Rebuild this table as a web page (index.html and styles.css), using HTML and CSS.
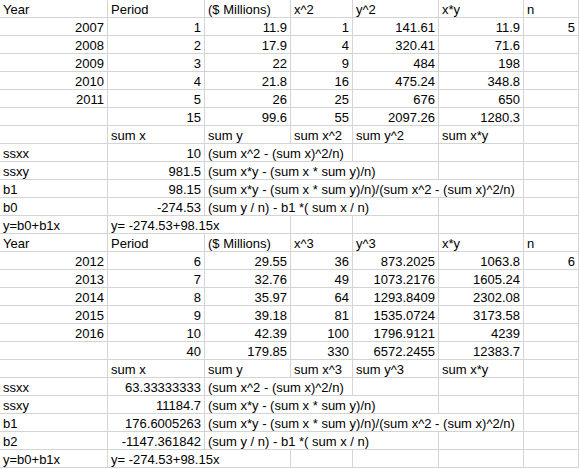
FILE: index.html
```html
<!DOCTYPE html>
<html>
<head>
<meta charset="utf-8">
<link rel="stylesheet" href="styles.css">
</head>
<body>
<table class="sheet">
<colgroup>
<col class="c1"><col class="c2"><col class="c3"><col class="c4"><col class="c5"><col class="c6"><col class="c7">
</colgroup>
<tbody>
<tr><td>Year</td><td>Period</td><td>($ Millions)</td><td>x^2</td><td>y^2</td><td>x*y</td><td>n</td></tr>
<tr><td class="r">2007</td><td class="r">1</td><td class="r">11.9</td><td class="r">1</td><td class="r">141.61</td><td class="r">11.9</td><td class="r">5</td></tr>
<tr><td class="r">2008</td><td class="r">2</td><td class="r">17.9</td><td class="r">4</td><td class="r">320.41</td><td class="r">71.6</td><td></td></tr>
<tr><td class="r">2009</td><td class="r">3</td><td class="r">22</td><td class="r">9</td><td class="r">484</td><td class="r">198</td><td></td></tr>
<tr><td class="r">2010</td><td class="r">4</td><td class="r">21.8</td><td class="r">16</td><td class="r">475.24</td><td class="r">348.8</td><td></td></tr>
<tr><td class="r">2011</td><td class="r">5</td><td class="r">26</td><td class="r">25</td><td class="r">676</td><td class="r">650</td><td></td></tr>
<tr><td></td><td class="r">15</td><td class="r">99.6</td><td class="r">55</td><td class="r">2097.26</td><td class="r">1280.3</td><td></td></tr>
<tr><td></td><td>sum x</td><td>sum y</td><td>sum x^2</td><td>sum y^2</td><td>sum x*y</td><td></td></tr>
<tr><td>ssxx</td><td class="r">10</td><td colspan="2">(sum x^2 - (sum x)^2/n)</td><td></td><td></td><td></td></tr>
<tr><td>ssxy</td><td class="r">981.5</td><td colspan="3">(sum x*y - (sum x * sum y)/n)</td><td></td><td></td></tr>
<tr><td>b1</td><td class="r">98.15</td><td colspan="4">(sum x*y - (sum x * sum y)/n)/(sum x^2 - (sum x)^2/n)</td><td></td></tr>
<tr><td>b0</td><td class="r">-274.53</td><td colspan="3">(sum y / n) - b1 *( sum x / n)</td><td></td><td></td></tr>
<tr><td>y=b0+b1x</td><td colspan="2">y= -274.53+98.15x</td><td></td><td></td><td></td><td></td></tr>
<tr><td>Year</td><td>Period</td><td>($ Millions)</td><td>x^3</td><td>y^3</td><td>x*y</td><td>n</td></tr>
<tr><td class="r">2012</td><td class="r">6</td><td class="r">29.55</td><td class="r">36</td><td class="r">873.2025</td><td class="r">1063.8</td><td class="r">6</td></tr>
<tr><td class="r">2013</td><td class="r">7</td><td class="r">32.76</td><td class="r">49</td><td class="r">1073.2176</td><td class="r">1605.24</td><td></td></tr>
<tr><td class="r">2014</td><td class="r">8</td><td class="r">35.97</td><td class="r">64</td><td class="r">1293.8409</td><td class="r">2302.08</td><td></td></tr>
<tr><td class="r">2015</td><td class="r">9</td><td class="r">39.18</td><td class="r">81</td><td class="r">1535.0724</td><td class="r">3173.58</td><td></td></tr>
<tr><td class="r">2016</td><td class="r">10</td><td class="r">42.39</td><td class="r">100</td><td class="r">1796.9121</td><td class="r">4239</td><td></td></tr>
<tr><td></td><td class="r">40</td><td class="r">179.85</td><td class="r">330</td><td class="r">6572.2455</td><td class="r">12383.7</td><td></td></tr>
<tr><td></td><td>sum x</td><td>sum y</td><td>sum x^3</td><td>sum y^3</td><td>sum x*y</td><td></td></tr>
<tr><td>ssxx</td><td class="r">63.33333333</td><td colspan="2">(sum x^2 - (sum x)^2/n)</td><td></td><td></td><td></td></tr>
<tr><td>ssxy</td><td class="r">11184.7</td><td colspan="3">(sum x*y - (sum x * sum y)/n)</td><td></td><td></td></tr>
<tr><td>b1</td><td class="r">176.6005263</td><td colspan="4">(sum x*y - (sum x * sum y)/n)/(sum x^2 - (sum x)^2/n)</td><td></td></tr>
<tr><td>b2</td><td class="r">-1147.361842</td><td colspan="3">(sum y / n) - b1 *( sum x / n)</td><td></td><td></td></tr>
<tr><td>y=b0+b1x</td><td colspan="2">y= -274.53+98.15x</td><td></td><td></td><td></td><td></td></tr>
</tbody>
</table>
</body>
</html>
```

FILE: styles.css
```css
html, body {
  margin: 0;
  padding: 0;
  background: #ffffff;
}

.sheet {
  table-layout: fixed;
  width: 579px;
  border-collapse: separate;
  border-spacing: 0;
  font-family: "Liberation Sans", Arial, sans-serif;
  font-size: 13px;
  color: #000000;
}

.c1 { width: 108px; }
.c2 { width: 97px; }
.c3 { width: 86px; }
.c4 { width: 62px; }
.c5 { width: 86px; }
.c6 { width: 85px; }
.c7 { width: 55px; }

.sheet tr {
  height: 18px;
}

.sheet td {
  box-sizing: border-box;
  height: 18px;
  padding: 3px 3px 0 3px;
  line-height: 14px;
  border-right: 1px solid #d4d4d4;
  border-bottom: 1px solid #d4d4d4;
  white-space: nowrap;
  overflow: hidden;
  vertical-align: top;
  text-align: left;
}

.sheet td.r {
  text-align: right;
}
```
